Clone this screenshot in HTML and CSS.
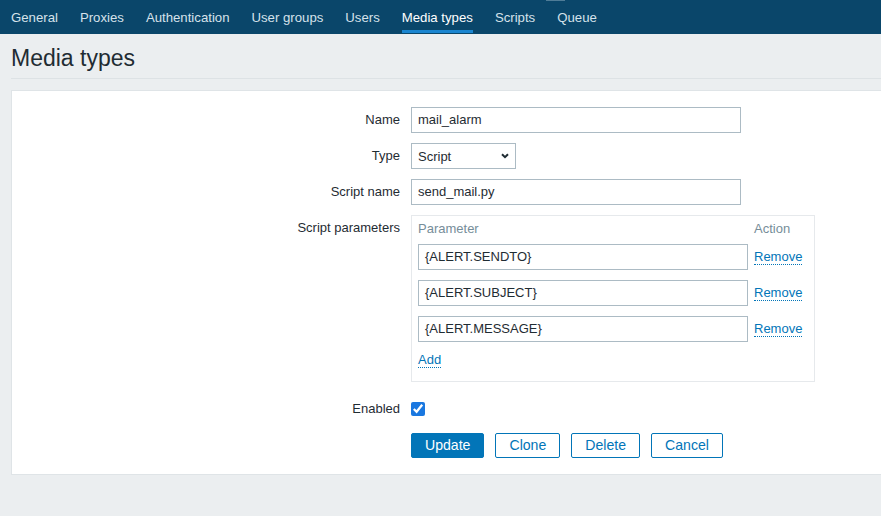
FILE: index.html
```html
<!DOCTYPE html>
<html lang="en">
<head>
<meta charset="utf-8">
<title>Media types</title>
<link rel="stylesheet" href="styles.css">
</head>
<body>
<nav class="topnav">
  <a class="tab">General</a>
  <a class="tab">Proxies</a>
  <a class="tab">Authentication</a>
  <a class="tab">User groups</a>
  <a class="tab">Users</a>
  <a class="tab active">Media types</a>
  <a class="tab">Scripts</a>
  <a class="tab">Queue</a>
  <span class="notch"></span>
</nav>
<header class="page-head">
  <h1>Media types</h1>
</header>
<main class="panel">
  <form class="form-grid">
    <label class="lbl">Name</label>
    <div class="fld"><div class="txt w330">mail_alarm</div></div>

    <label class="lbl">Type</label>
    <div class="fld">
      <div class="select">
        <span>Script</span>
        <svg width="8" height="6" viewBox="0 0 8 6"><path d="M1 1.2 L4 4.2 L7 1.2" fill="none" stroke="#1f2c33" stroke-width="2"/></svg>
      </div>
    </div>

    <label class="lbl">Script name</label>
    <div class="fld"><div class="txt w330">send_mail.py</div></div>

    <label class="lbl">Script parameters</label>
    <div class="fld">
      <div class="params">
        <div class="params-head">
          <span>Parameter</span>
          <span>Action</span>
        </div>
        <div class="params-row">
          <div class="txt">{ALERT.SENDTO}</div>
          <a class="link">Remove</a>
        </div>
        <div class="params-row">
          <div class="txt">{ALERT.SUBJECT}</div>
          <a class="link">Remove</a>
        </div>
        <div class="params-row">
          <div class="txt">{ALERT.MESSAGE}</div>
          <a class="link">Remove</a>
        </div>
        <div class="params-add"><a class="link">Add</a></div>
      </div>
    </div>

    <label class="lbl row-enabled">Enabled</label>
    <div class="fld row-enabled"><input type="checkbox" class="chk" checked></div>

    <div class="buttons">
      <button type="button" class="btn primary">Update</button>
      <button type="button" class="btn">Clone</button>
      <button type="button" class="btn">Delete</button>
      <button type="button" class="btn">Cancel</button>
    </div>
  </form>
</main>
</body>
</html>
```

FILE: styles.css
```css
html, body {
  margin: 0;
  padding: 0;
}
body {
  background: #ebeef0;
  font-family: "Liberation Sans", Arial, sans-serif;
  font-size: 13px;
  color: #1f2c33;
  overflow: hidden;
  height: 516px;
}

/* top navigation */
.topnav {
  position: relative;
  display: flex;
  height: 34px;
  background: #0a466a;
}
.tab {
  position: relative;
  display: flex;
  align-items: center;
  padding: 1px 11px 0;
  color: #d6e2ea;
  font-size: 13.2px;
  line-height: 33px;
}
.tab.active {
  color: #ffffff;
}
.tab.active::after {
  content: "";
  position: absolute;
  left: 11px;
  right: 11px;
  top: 30px;
  height: 3px;
  background: #1a85d0;
}
.notch {
  position: absolute;
  left: 546px;
  top: 0;
  width: 19px;
  height: 1px;
  background: #4f7c97;
}

/* page header */
.page-head {
  margin-left: 11px;
  padding: 10px 0 6px;
  border-bottom: 1px solid #dde2e5;
}
.page-head h1 {
  margin: 0;
  font-size: 23px;
  line-height: 28px;
  font-weight: normal;
  color: #1f2c33;
}

/* form panel */
.panel {
  margin: 11px -20px 0 11px;
  background: #ffffff;
  border: 1px solid #dfe4e7;
  padding: 16px 0 16px;
}
.form-grid {
  display: grid;
  grid-template-columns: 388px 1fr;
  column-gap: 11px;
  row-gap: 10px;
  margin: 0;
}
.lbl {
  text-align: right;
  line-height: 26px;
  align-self: start;
}
.fld {
  display: flex;
  align-items: center;
  min-height: 26px;
}
.row-enabled {
  margin-top: 4px;
}

.txt {
  box-sizing: border-box;
  height: 26px;
  line-height: 24px;
  border: 1px solid #acbbc4;
  padding: 0 6px;
  background: #ffffff;
  color: #1f2c33;
  font-size: 13px;
  white-space: nowrap;
}
.w330 {
  width: 330px;
}

.select {
  box-sizing: border-box;
  width: 105px;
  height: 26px;
  border: 1px solid #acbbc4;
  display: flex;
  align-items: center;
  justify-content: space-between;
  padding: 0 6px 0 6px;
}

/* script parameters table */
.params {
  box-sizing: border-box;
  width: 404px;
  border: 1px solid #e6e9ec;
  padding: 5px 11px 13px 6px;
}
.params-head {
  display: grid;
  grid-template-columns: 330px 1fr;
  column-gap: 6px;
  line-height: 16px;
  color: #768d99;
  margin-bottom: 7px;
}
.params-row {
  display: grid;
  grid-template-columns: 330px 1fr;
  column-gap: 6px;
  align-items: center;
  margin-bottom: 10px;
}
.params-add {
  height: 16px;
}
.link {
  display: inline-block;
  justify-self: start;
  line-height: 15px;
  color: #0275b8;
  border-bottom: 1px dotted #0275b8;
  cursor: pointer;
}

.chk {
  width: 14px;
  height: 14px;
  margin: 0;
  accent-color: #1a78e0;
}

/* buttons */
.buttons {
  grid-column: 2;
  display: flex;
  gap: 11px;
  margin-top: 1px;
}
.btn {
  box-sizing: border-box;
  height: 25px;
  padding: 0 13px;
  border: 1px solid #0275b8;
  border-radius: 2px;
  background: #ffffff;
  color: #0275b8;
  font-family: "Liberation Sans", Arial, sans-serif;
  font-size: 14.1px;
  line-height: 23px;
}
.btn.primary {
  background: #0275b8;
  color: #ffffff;
}
```
